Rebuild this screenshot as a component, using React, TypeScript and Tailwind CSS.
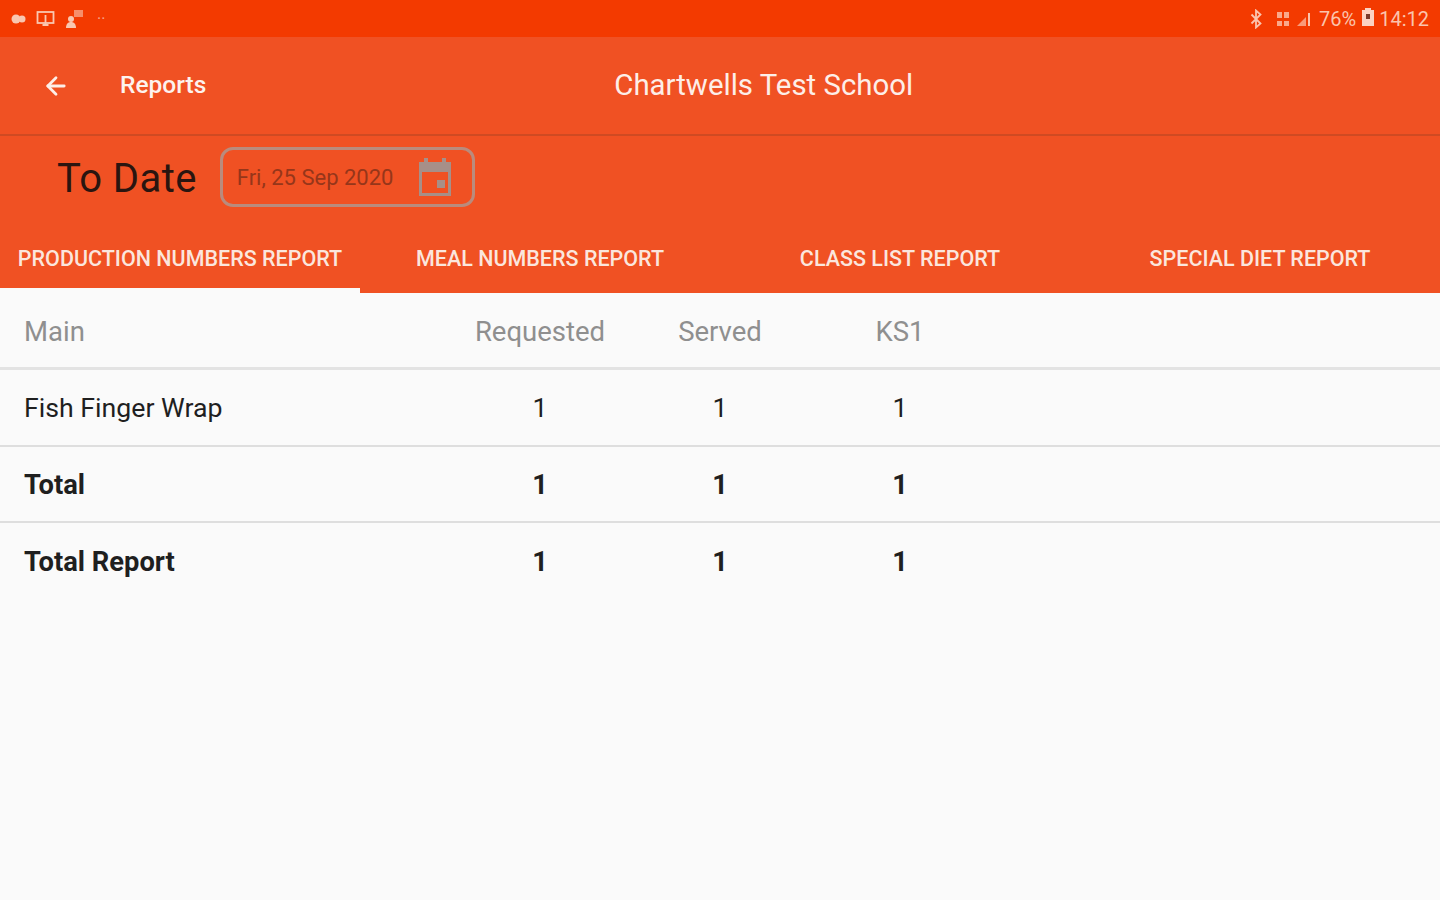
import { ArrowLeft } from 'lucide-react';

const tabs = ['PRODUCTION NUMBERS REPORT', 'MEAL NUMBERS REPORT', 'CLASS LIST REPORT', 'SPECIAL DIET REPORT'];

const rows = [
  { name: 'Fish Finger Wrap', bold: false, height: 'h-[77px] pt-[2px]' },
  { name: 'Total', bold: true, height: 'h-[76px] pt-[2px]' },
  { name: 'Total Report', bold: true, height: 'h-[78px]' },
];

function StatusIcons() {
  return (
    <div className="flex items-center gap-[8px] pl-[10px]">
      <svg width="18" height="14" viewBox="0 0 18 14" fill="#f9c7b0">
        <circle cx="6" cy="7" r="4.5" />
        <circle cx="12" cy="7" r="3.5" />
      </svg>
      <svg width="20" height="18" viewBox="0 0 20 18" fill="none" stroke="#f9c7b0" strokeWidth="1.8">
        <rect x="1.5" y="2" width="16" height="11" />
        <path d="M9.5 5v10M6.5 15h6" />
      </svg>
      <svg width="20" height="20" viewBox="0 0 20 20" fill="#f9c7b0">
        <circle cx="7" cy="10" r="3" />
        <path d="M2 19c0-4 2-6 5-6s5 2 5 6z" />
        <rect x="10" y="1" width="9" height="7" fillOpacity="0.6" />
      </svg>
      <span className="ml-[5px] text-[16px] leading-none text-[#f9a58a]">··</span>
    </div>
  );
}

function StatusRight() {
  return (
    <div className="flex items-center pr-[11px] text-[20px] text-[#fbc4ad]">
      <svg width="12" height="20" viewBox="0 0 12 20" fill="none" stroke="#fbc4ad" strokeWidth="1.8">
        <path d="M1.5 5.5l9 9-4.5 4V1.500l4.500 4-9 9" />
      </svg>
      <svg className="ml-[14px]" width="14" height="18" viewBox="0 0 14 18" fill="#fbc4ad">
        <rect x="1" y="2" width="5" height="6" fillOpacity="0.8" />
        <rect x="8" y="2" width="5" height="6" fillOpacity="0.8" />
        <rect x="1" y="11" width="5" height="5" fillOpacity="0.8" />
        <rect x="8" y="11" width="5" height="5" fillOpacity="0.8" />
      </svg>
      <svg className="ml-[6px]" width="16" height="16" viewBox="0 0 16 16" fill="#fbc4ad">
        <path d="M1 15L10 6v9z" fillOpacity="0.7" />
        <rect x="12" y="2" width="2" height="13" />
      </svg>
      <span className="ml-[7px] leading-none">76%</span>
      <svg className="ml-[5px] mb-[3px]" width="14" height="18" viewBox="0 0 14 18">
        <path d="M4 0h6v2h3v16H1V2h3z" fill="#fbd3c2" />
        <rect x="5" y="6" width="4" height="5" fill="#7a3a2a" />
      </svg>
      <span className="ml-[4px] leading-none">14:12</span>
    </div>
  );
}

export default function App() {
  return (
    <div className="flex h-[900px] w-[1440px] flex-col overflow-hidden bg-[#fafafa] font-['Roboto',sans-serif]">
      <div className="flex h-[37px] items-center justify-between bg-[#f33a00]">
        <StatusIcons />
        <StatusRight />
      </div>

      <div className="flex h-[99px] items-center border-b-2 border-[#cf4a22] bg-[#f05123]">
        <ArrowLeft className="ml-[42px] h-[28px] w-[28px] text-[#fdeee8]" strokeWidth={2.4} />
        <span className="ml-[50px] text-[24.5px] font-medium text-[#fdf3ee]">Reports</span>
        <span className="ml-[408px] text-[29.4px] text-[#fdeee8]">Chartwells Test School</span>
      </div>

      <div className="flex h-[82px] items-center bg-[#f05123] pb-[1px]">
        <span className="ml-[57px] pt-[5px] text-[40px] leading-none tracking-[0.4px] text-[#2a1510]">To Date</span>
        <div className="ml-[23px] flex h-[60px] w-[255px] items-center justify-between rounded-[13px] border-[3px] border-[#b98b7d] pl-[14px] pr-[19px]">
          <span className="pt-[1px] text-[22px] text-[#96361a]">Fri, 25 Sep 2020</span>
          <svg width="36" height="38" viewBox="0 0 36 38" fill="#a78f88">
            <rect x="7" y="0" width="4" height="6" />
            <rect x="25" y="0" width="4" height="6" />
            <path fillRule="evenodd" d="M2 4h32v34H2zM5 14v21h26V14z" />
            <rect x="20" y="22" width="8" height="8" />
          </svg>
        </div>
      </div>

      <div className="flex h-[75px] bg-[#f05123]">
        {tabs.map((tab, i) => (
          <div
            key={tab}
            className={`flex w-[360px] items-center justify-center border-b-[5px] pt-[13px] text-[21.5px] font-medium text-[#fbe6dd] ${
              i === 0 ? 'border-[#fafafa]' : 'border-transparent'
            }`}
          >
            {tab}
          </div>
        ))}
      </div>

      <div className="grid h-[77px] grid-cols-[450px_180px_180px_180px] items-center border-b-[3px] border-[#e3e3e3] pt-[4px] text-[27.5px] text-[#8f8f8f]">
        <span className="pl-[24px]">Main</span>
        <span className="text-center">Requested</span>
        <span className="text-center">Served</span>
        <span className="text-center">KS1</span>
      </div>

      {rows.map((row, i) => (
        <div
          key={row.name}
          className={`grid grid-cols-[450px_180px_180px_180px] items-center text-[#1f1f1f] ${row.height} ${
            i < rows.length - 1 ? 'border-b-[2px] border-[#dedede]' : ''
          } ${row.bold ? 'text-[27.3px] font-bold' : 'text-[26.7px]'}`}
        >
          <span className="pl-[24px]">{row.name}</span>
          <span className="text-center">1</span>
          <span className="text-center">1</span>
          <span className="text-center">1</span>
        </div>
      ))}
    </div>
  );
}
